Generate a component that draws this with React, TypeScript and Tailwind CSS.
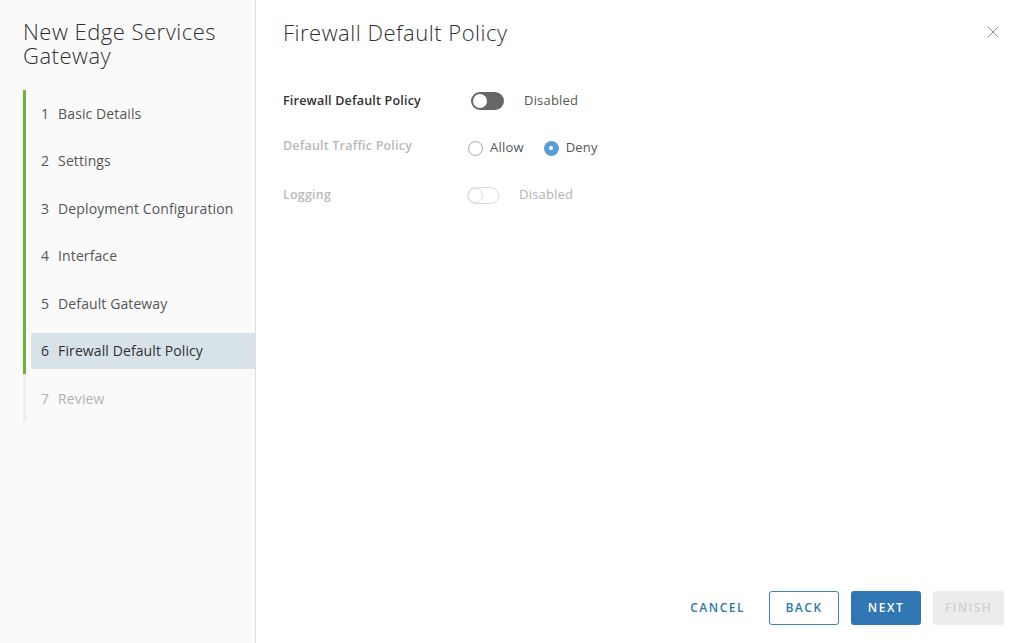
import React from "react";
import { X } from "lucide-react";

const steps = [
  { n: 1, label: "Basic Details", state: "done" },
  { n: 2, label: "Settings", state: "done" },
  { n: 3, label: "Deployment Configuration", state: "done" },
  { n: 4, label: "Interface", state: "done" },
  { n: 5, label: "Default Gateway", state: "done" },
  { n: 6, label: "Firewall Default Policy", state: "active" },
  { n: 7, label: "Review", state: "todo" },
];

function Toggle({ disabled }: { disabled?: boolean }) {
  if (disabled) {
    return (
      <div className="w-[32px] h-[17px] rounded-full border border-[#dcdcdc] bg-white flex items-center">
        <div className="w-[15px] h-[15px] rounded-full border border-[#dcdcdc] bg-white" />
      </div>
    );
  }
  return (
    <div className="w-[33px] h-[18px] rounded-full bg-[#666666] flex items-center pl-[2px]">
      <div className="w-[14px] h-[14px] rounded-full bg-white" />
    </div>
  );
}

function Radio({ checked, label }: { checked?: boolean; label: string }) {
  return (
    <div className="flex items-center gap-[7px]">
      {checked ? (
        <div className="w-[15px] h-[15px] rounded-full bg-[#5a9fd1] flex items-center justify-center">
          <div className="w-[4px] h-[4px] rounded-full bg-white" />
        </div>
      ) : (
        <div className="w-[15px] h-[15px] rounded-full border border-[#a8a8a8] bg-white" />
      )}
      <span className="text-[13px] text-[#565656] tracking-[0.2px]">{label}</span>
    </div>
  );
}

export default function App() {
  return (
    <div
      className="flex w-[1024px] h-[643px] bg-white text-[#333]"
      style={{ fontFamily: "'Open Sans', Lato, sans-serif" }}
    >
      {/* wizard steps */}
      <aside className="w-[256px] shrink-0 bg-[#fafafa] border-r border-[#dddddd] pl-[23px]">
        <h1 className="pt-[19px] text-[22px] leading-[24px] font-light text-[#313131] tracking-[0.5px]">
          New Edge Services
          <br />
          Gateway
        </h1>
        <div className="flex mt-[23px]">
          <div className="flex flex-col w-[3px]">
            <div className="h-[284px] bg-[#6cb33e]" />
            <div className="h-[48px] bg-[#eeeeee]" />
          </div>
          <nav className="flex-1 flex flex-col gap-[11.5px] pt-[5px] pl-[5px]">
            {steps.map((s) => (
              <div
                key={s.n}
                className={
                  "h-[36px] flex items-center gap-[9px] pl-[10px] text-[14px] tracking-[0.1px] rounded-l-[3px] " +
                  (s.state === "active"
                    ? "bg-[#d8e3e9] text-[#313131] font-medium"
                    : s.state === "todo"
                    ? "text-[#b3b3b3]"
                    : "text-[#565656]")
                }
              >
                <span>{s.n}</span>
                <span>{s.label}</span>
              </div>
            ))}
          </nav>
        </div>
      </aside>

      {/* step content */}
      <main className="flex-1 flex flex-col pl-[27px] pr-[20px] pb-[18px]">
        <div className="flex items-start justify-between pt-[18px]">
          <h2 className="text-[22px] leading-[28px] font-light text-[#313131] tracking-[0.5px]">
            Firewall Default Policy
          </h2>
          <button className="mt-[5px] mr-[2px] text-[#8c8c8c]">
            <X size={18} strokeWidth={1.3} />
          </button>
        </div>

        <div className="mt-[45px] flex flex-col">
          <div className="flex items-center h-[20px]">
            <div className="w-[188px] text-[12.5px] font-semibold text-[#313131] tracking-[0.2px]">
              Firewall Default Policy
            </div>
            <Toggle />
            <span className="ml-[20px] text-[13px] text-[#565656] tracking-[0.2px]">Disabled</span>
          </div>
          <div className="flex items-center h-[20px] mt-[27px]">
            <div className="w-[185px] text-[12.5px] font-semibold text-[#b9b9b9] tracking-[0.2px] -mt-[4px]">
              Default Traffic Policy
            </div>
            <div className="flex items-center gap-[20px]">
              <Radio label="Allow" />
              <Radio checked label="Deny" />
            </div>
          </div>
          <div className="flex items-center h-[20px] mt-[27px]">
            <div className="w-[184px] text-[12.5px] font-semibold text-[#b9b9b9] tracking-[0.2px]">Logging</div>
            <Toggle disabled />
            <span className="ml-[20px] text-[13px] text-[#b3b3b3] tracking-[0.2px]">Disabled</span>
          </div>
        </div>

        <div className="mt-auto flex items-center justify-end gap-[12px] text-[12px] font-semibold tracking-[1.5px]">
          <button className="h-[34px] px-[7px] mr-[5px] text-[#2f77b2]">CANCEL</button>
          <button className="h-[34px] w-[70px] rounded-[3px] border border-[#3b82bd] bg-white text-[#2f77b2]">
            BACK
          </button>
          <button className="h-[34px] w-[70px] rounded-[3px] bg-[#2f76b2] text-white">NEXT</button>
          <button className="h-[34px] w-[71px] rounded-[3px] bg-[#ececec] text-[#d0d0d0]">FINISH</button>
        </div>
      </main>
    </div>
  );
}
